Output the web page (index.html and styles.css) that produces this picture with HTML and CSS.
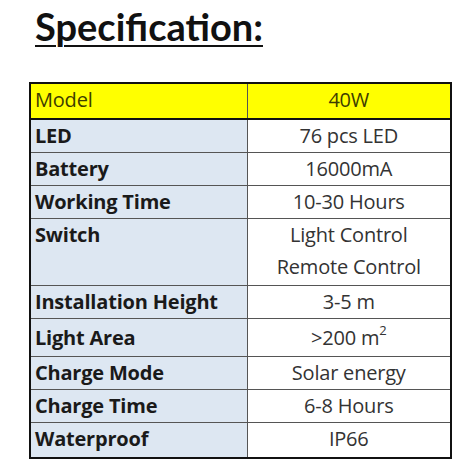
FILE: index.html
```html
<!DOCTYPE html>
<html>
<head>
<meta charset="utf-8">
<link rel="stylesheet" href="styles.css">
</head>
<body>
<div class="page">
  <h1 class="title">Specification:</h1>
  <table class="spec">
    <tr class="head"><td class="k">Model</td><td class="v">40W</td></tr>
    <tr><td class="k">LED</td><td class="v">76 pcs LED</td></tr>
    <tr><td class="k">Battery</td><td class="v">16000mA</td></tr>
    <tr><td class="k">Working Time</td><td class="v">10-30 Hours</td></tr>
    <tr class="tall"><td class="k">Switch</td><td class="v">Light Control<br>Remote Control</td></tr>
    <tr><td class="k">Installation Height</td><td class="v">3-5 m</td></tr>
    <tr class="area"><td class="k">Light Area</td><td class="v">&gt;200 m<sup>2</sup></td></tr>
    <tr><td class="k">Charge Mode</td><td class="v">Solar energy</td></tr>
    <tr><td class="k">Charge Time</td><td class="v">6-8 Hours</td></tr>
    <tr><td class="k">Waterproof</td><td class="v">IP66</td></tr>
  </table>
</div>
</body>
</html>
```
FILE: styles.css
```css
html, body {
  margin: 0;
  padding: 0;
  background: #ffffff;
}
.page {
  width: 468px;
  height: 472px;
  padding: 4px 0 0 29px;
  box-sizing: border-box;
  font-family: "Open Sans", Lato, sans-serif;
}
.title {
  margin: 0 0 0 6px;
  font-family: Lato, "Open Sans", sans-serif;
  font-size: 38px;
  font-weight: 700;
  line-height: 44px;
  color: #111111;
  text-decoration: underline;
  text-decoration-thickness: 2px;
  text-underline-offset: 4px;
  height: 78px;
}
.spec {
  border-collapse: collapse;
  border: 2px solid #111111;
  width: 423px;
  font-size: 20px;
  letter-spacing: -0.2px;
}
.spec td {
  border: 1px solid #555555;
  height: 33px;
  padding: 0 4px;
  vertical-align: top;
  line-height: 32px;
  box-sizing: border-box;
}
.spec td.k {
  width: 217px;
  background: #dde7f2;
  font-weight: 700;
  color: #1a1a1a;
  text-align: left;
}
.spec td.v {
  background: #ffffff;
  color: #333333;
  text-align: center;
  border-right: 2px solid #111111;
}
.spec tr.head td {
  background: #ffff00;
  color: #3d3d00;
  font-weight: 400;
  border-bottom: 2px solid #111111;
  border-top: 2px solid #111111;
  height: 36px;
}
.spec tr.tall td {
  height: 67px;
}
.spec tr.area td {
  height: 38px;
  line-height: 37px;
}
.spec sup {
  font-size: 13px;
  line-height: 0;
  vertical-align: 10px;
}
.spec tr:last-child td {
  border-bottom: 2px solid #111111;
  height: 35px;
}
```
